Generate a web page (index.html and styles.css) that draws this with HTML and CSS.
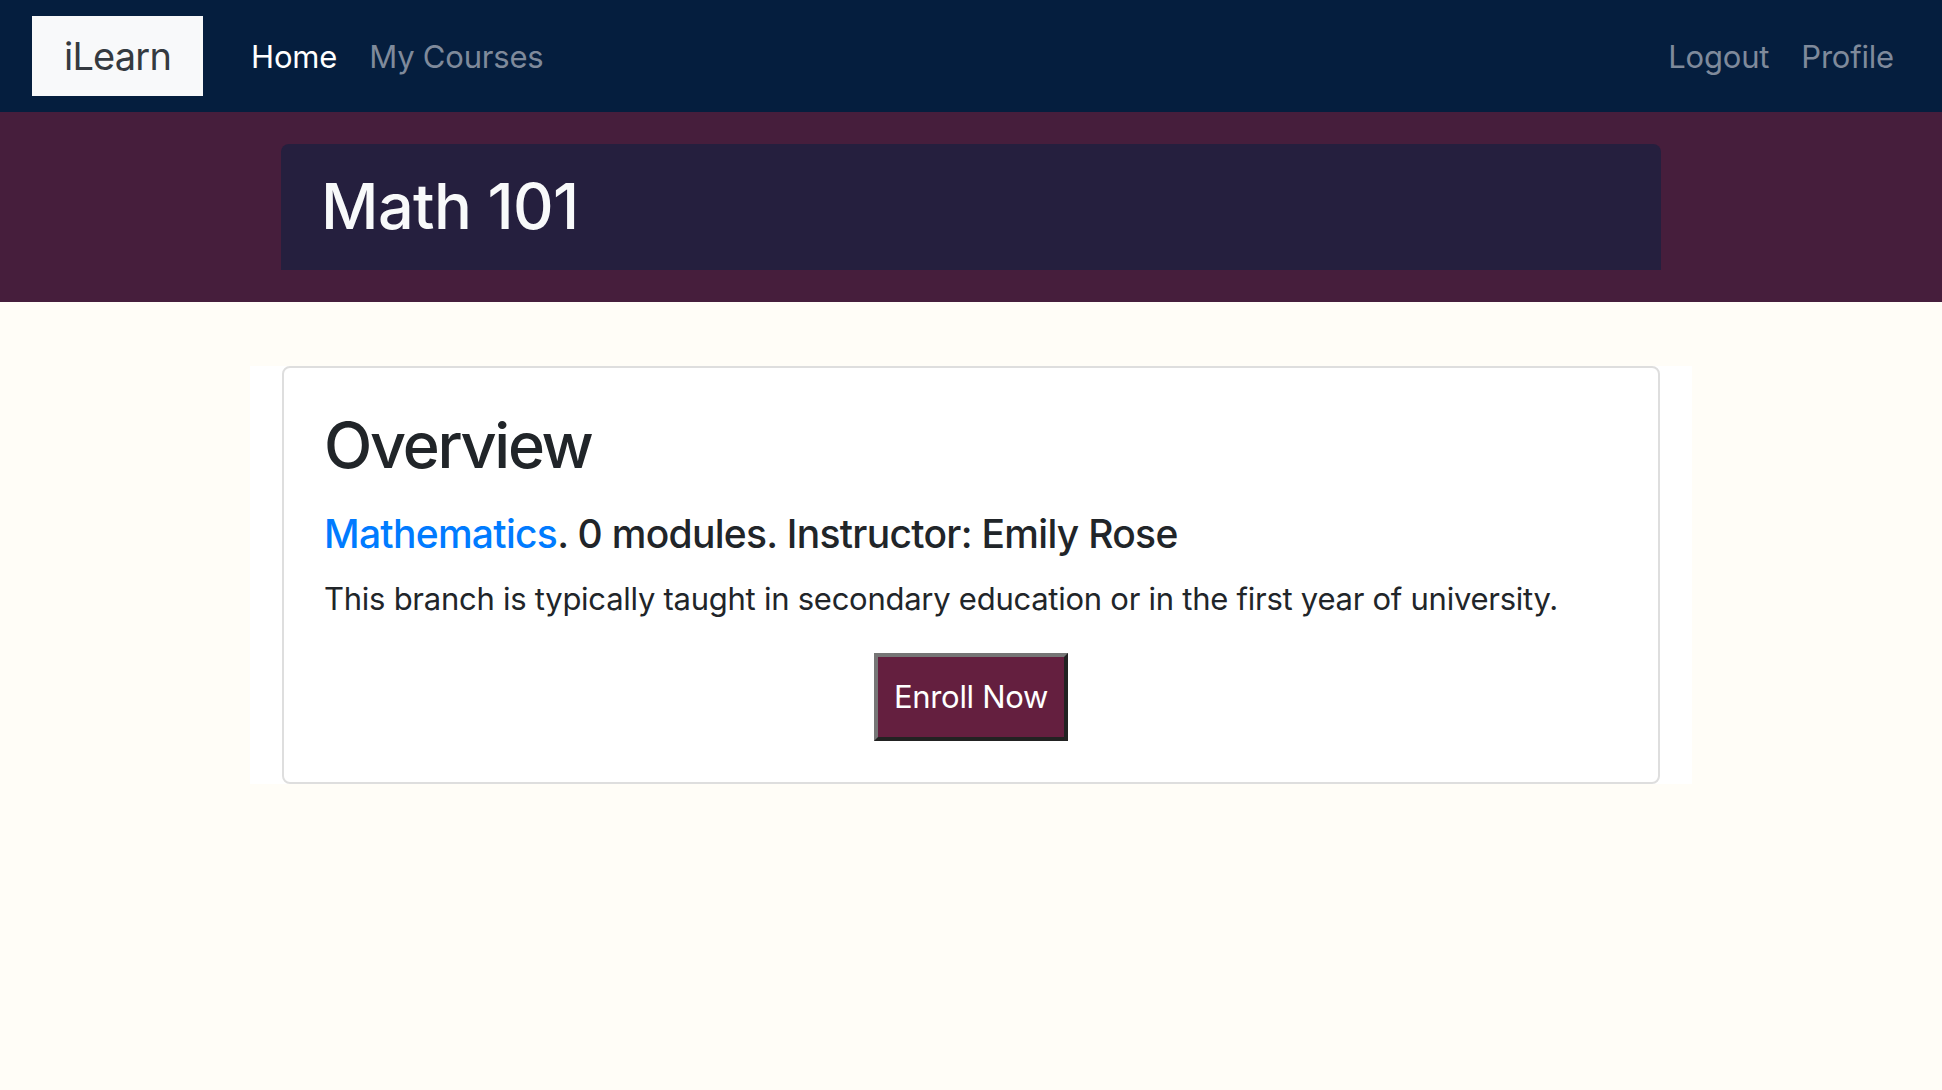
FILE: index.html
```html
<!DOCTYPE html>
<html lang="en">
<head>
<meta charset="utf-8">
<title>iLearn - Math 101</title>
<link rel="stylesheet" href="styles.css">
</head>
<body>
<nav class="navbar">
  <a class="brand" href="#">iLearn</a>
  <ul class="nav-links">
    <li><a class="nav-link active" href="#">Home</a></li>
    <li><a class="nav-link" href="#">My Courses</a></li>
  </ul>
  <ul class="nav-links nav-right">
    <li><a class="nav-link" href="#">Logout</a></li>
    <li><a class="nav-link" href="#">Profile</a></li>
  </ul>
</nav>
<header class="banner">
  <div class="title-box">
    <h1 class="course-title">Math 101</h1>
  </div>
</header>
<main class="content">
  <div class="container">
    <section class="card">
      <h2 class="card-title">Overview</h2>
      <h3 class="card-meta"><a class="subject" href="#">Mathematics</a>. 0 modules. Instructor: Emily Rose</h3>
      <p class="card-text">This branch is typically taught in secondary education or in the first year of university.</p>
      <div class="actions">
        <button class="enroll" type="button">Enroll Now</button>
      </div>
    </section>
  </div>
</main>
</body>
</html>
```

FILE: styles.css
```css
* {
  box-sizing: border-box;
}

html, body {
  margin: 0;
  padding: 0;
}

body {
  background: #fffdf7;
  font-family: Inter, "Noto Sans", "Liberation Sans", sans-serif;
  color: #212529;
  min-height: 1090px;
}

a {
  text-decoration: none;
}

.navbar {
  height: 112px;
  background: #051e3e;
  display: flex;
  align-items: center;
  padding: 0 32px;
}

.brand {
  height: 80px;
  padding: 0 32px;
  background: #f8f9fa;
  color: #343a40;
  font-size: 38px;
  letter-spacing: -0.8px;
  display: flex;
  align-items: center;
  margin-right: 32px;
}

.nav-links {
  list-style: none;
  margin: 0;
  padding: 0;
  display: flex;
}

.nav-right {
  margin-left: auto;
}

.nav-link {
  display: block;
  padding: 16px 16px;
  font-size: 31px;
  letter-spacing: -0.2px;
  color: #7f8a9b;
}

.nav-link.active {
  color: #ffffff;
}

.banner {
  background: #461e3c;
  padding: 32px 0;
}

.title-box {
  width: 1380px;
  height: 126px;
  margin: 0 auto;
  background: #251f3e;
  border-radius: 8px 8px 0 0;
  display: flex;
  align-items: center;
  padding: 0 40px;
}

.course-title {
  margin: 0;
  font-size: 63px;
  font-weight: 500;
  letter-spacing: -0.6px;
  color: #f8f9fa;
  line-height: 1.2;
}

.content {
  padding-top: 64px;
}

.container {
  width: 1442px;
  margin: 0 auto;
  padding: 0 32px;
  background: #ffffff;
}

.card {
  background: #ffffff;
  border: 2px solid #dedede;
  border-radius: 8px;
  padding: 40px 40px 41px;
}

.card-title {
  margin: 0 0 27px;
  font-size: 63px;
  font-weight: 500;
  letter-spacing: -2.3px;
  line-height: 1.2;
  color: #212529;
}

.card-meta {
  margin: 0 0 19px;
  font-size: 39px;
  font-weight: 500;
  letter-spacing: -0.7px;
  line-height: 1.2;
  color: #212529;
}

.subject {
  color: #007bff;
}

.card-text {
  margin: 0 0 30px;
  font-size: 31px;
  letter-spacing: -0.26px;
  line-height: 1.5;
  color: #212529;
}

.actions {
  text-align: center;
}

.enroll {
  width: 194px;
  height: 88px;
  background: #641f3f;
  color: #ffffff;
  font-family: Inter, "Noto Sans", sans-serif;
  font-size: 31px;
  letter-spacing: -0.3px;
  border: 4px solid;
  border-color: #767676 #222222 #222222 #767676;
  padding: 0;
  cursor: pointer;
}
```
